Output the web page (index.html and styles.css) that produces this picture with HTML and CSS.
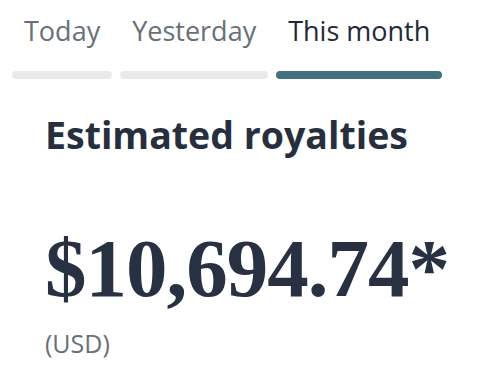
FILE: index.html
```html
<!DOCTYPE html>
<html>
<head>
<meta charset="utf-8">
<link rel="stylesheet" href="styles.css">
</head>
<body>
<div class="page">
  <div class="tabs">
    <div class="tab"><span class="tab-label">Today</span><span class="tab-bar"></span></div>
    <div class="tab"><span class="tab-label">Yesterday</span><span class="tab-bar"></span></div>
    <div class="tab tab-active"><span class="tab-label">This month</span><span class="tab-bar"></span></div>
  </div>
  <div class="summary">
    <h1 class="title">Estimated royalties</h1>
    <div class="amount">$10,694.74*</div>
    <div class="currency">(USD)</div>
  </div>
</div>
</body>
</html>
```
FILE: styles.css
```css
html, body {
  margin: 0;
  padding: 0;
  background: #ffffff;
}
.page {
  width: 492px;
  height: 390px;
  overflow: hidden;
  font-family: "Open Sans", "Noto Sans", sans-serif;
}
.tabs {
  display: flex;
  gap: 8px;
  padding: 13px 12px 0;
}
.tab {
  display: flex;
  flex-direction: column;
}
.tab-label {
  display: block;
  padding: 0 12px;
  font-size: 27px;
  line-height: 36px;
  color: #687078;
  white-space: nowrap;
}
.tab-bar {
  display: block;
  height: 8px;
  margin-top: 22px;
  border-radius: 4px;
  background: #e9ebeb;
}
.tab-active .tab-label {
  color: #1f2937;
}
.tab-active .tab-bar {
  background: #44717f;
}
.summary {
  padding-left: 45px;
}
.title {
  margin: 33.5px 0 0;
  font-size: 37.5px;
  line-height: 43px;
  font-weight: 700;
  color: #262f3d;
}
.amount {
  margin-top: 71px;
  font-family: "Liberation Serif", "DejaVu Serif", serif;
  font-weight: 700;
  font-size: 83px;
  line-height: 83px;
  letter-spacing: -1px;
  color: #283142;
}
.currency {
  margin-top: 19px;
  font-size: 25px;
  line-height: 28px;
  color: #687078;
}
```
